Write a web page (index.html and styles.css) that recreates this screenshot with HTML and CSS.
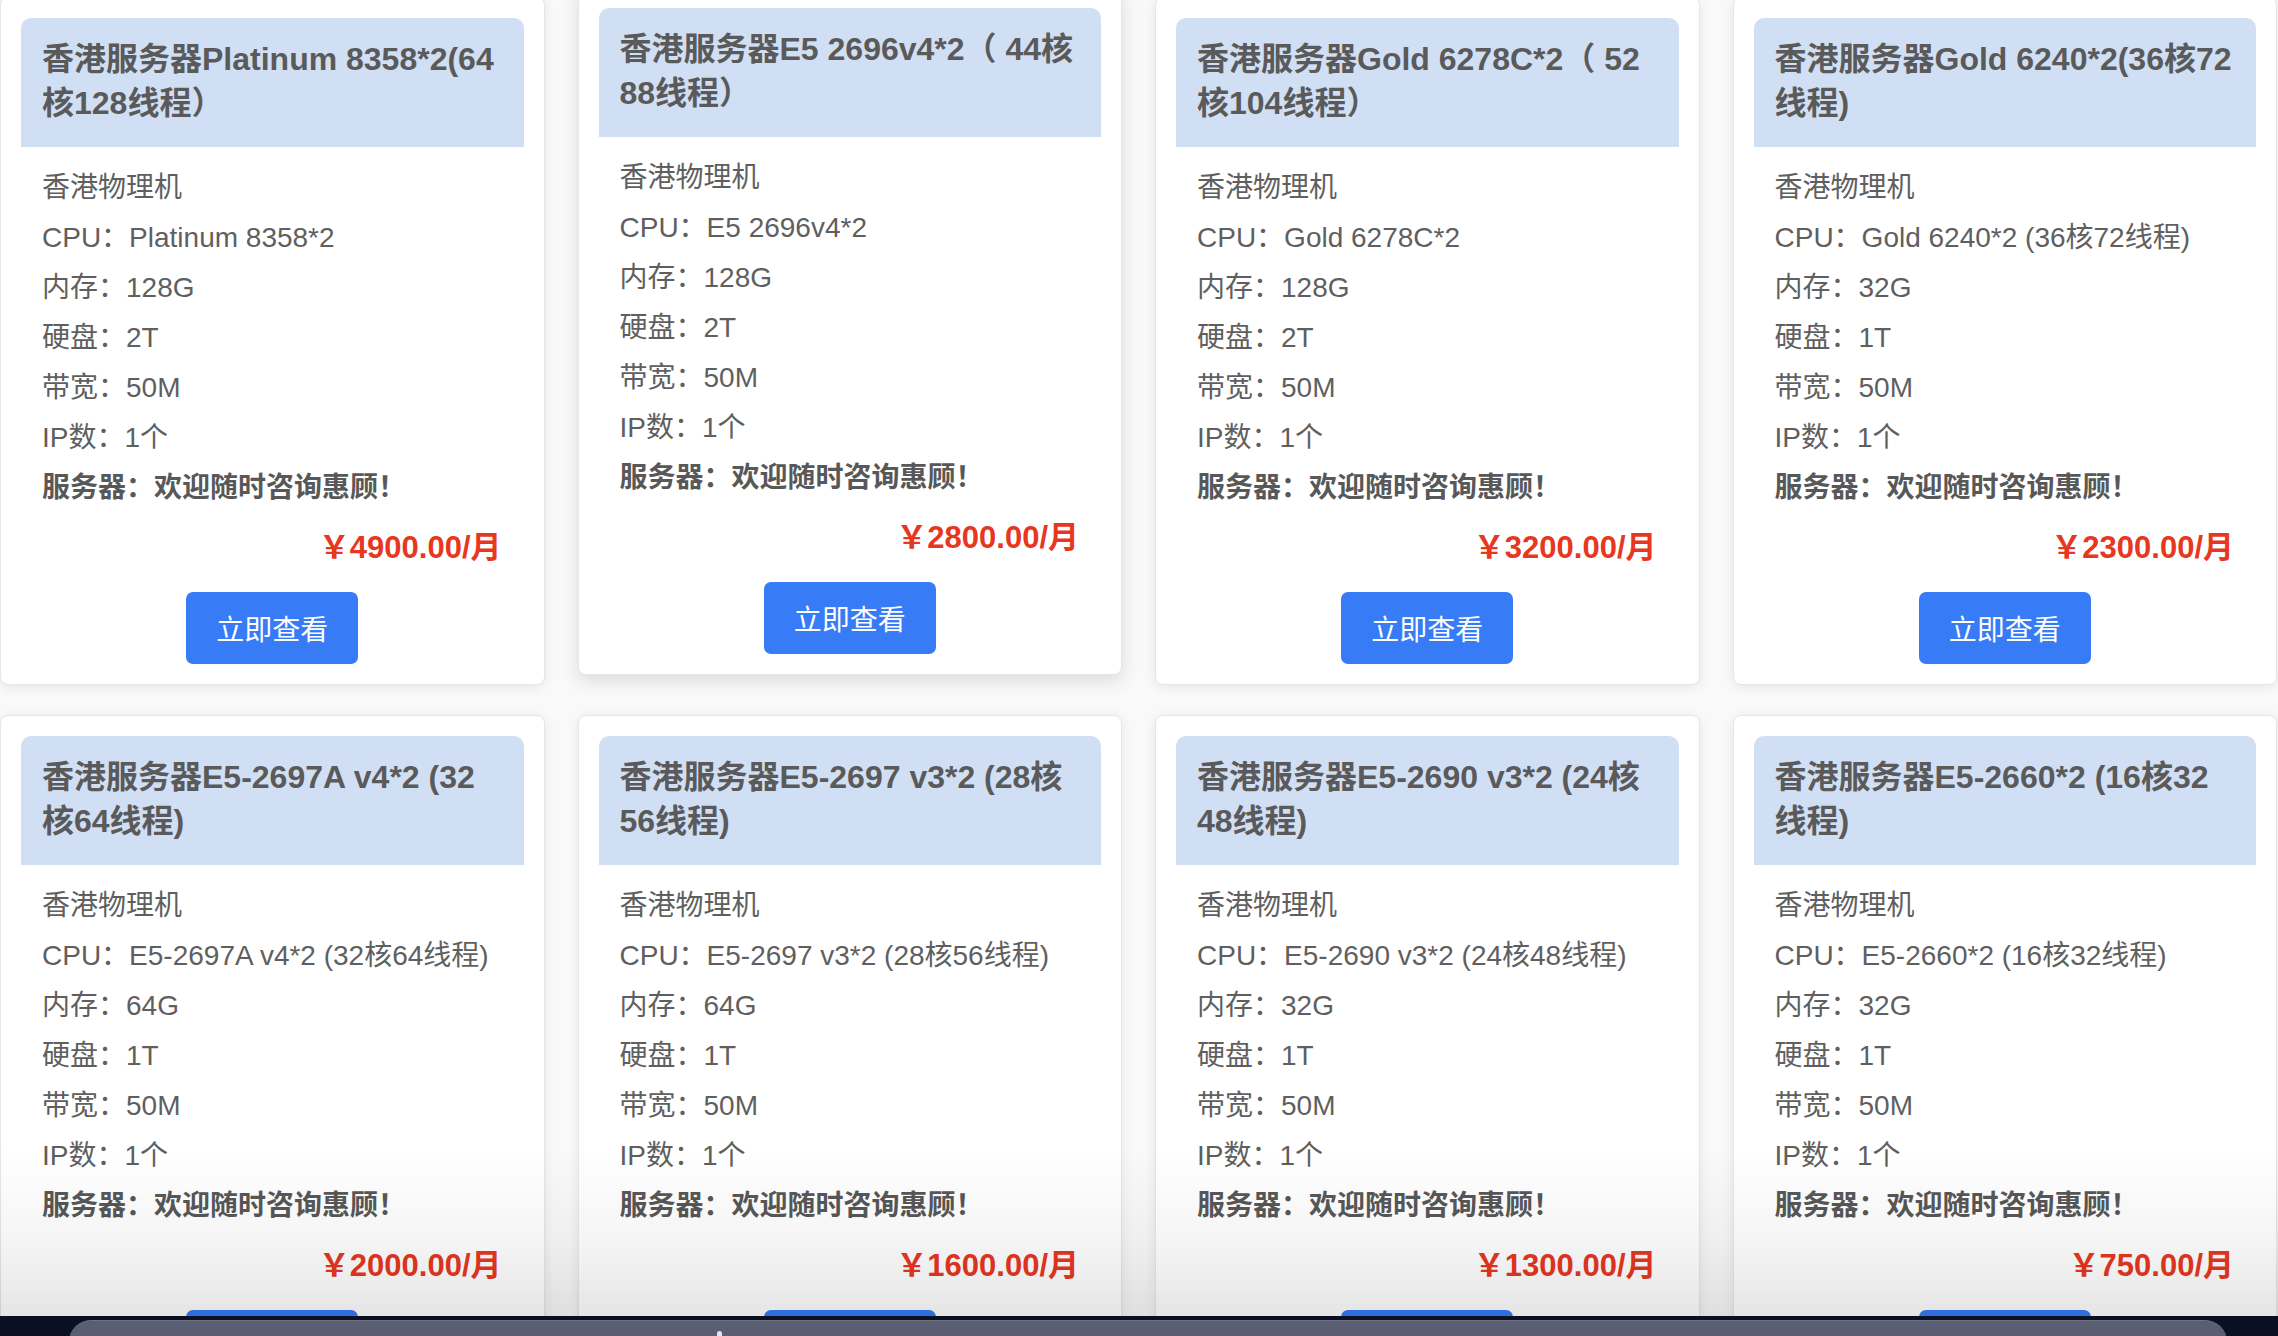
FILE: index.html
```html
<!DOCTYPE html>
<html lang="zh-CN">
<head>
<meta charset="utf-8">
<title>香港服务器</title>
<link rel="stylesheet" href="styles.css">
</head>
<body>
<main class="grid">
  <div class="card">
    <div class="card-head">香港服务器Platinum 8358*2(64核128线程）</div>
    <ul class="specs">
      <li>香港物理机</li>
      <li>CPU：Platinum 8358*2</li>
      <li>内存：128G</li>
      <li>硬盘：2T</li>
      <li>带宽：50M</li>
      <li>IP数：1个</li>
      <li class="strong">服务器：欢迎随时咨询惠顾！</li>
    </ul>
    <div class="price">￥4900.00/月</div>
    <div class="actions"><a class="btn">立即查看</a></div>
  </div>
  <div class="card is-hover">
    <div class="card-head">香港服务器E5 2696v4*2（ 44核88线程）</div>
    <ul class="specs">
      <li>香港物理机</li>
      <li>CPU：E5 2696v4*2</li>
      <li>内存：128G</li>
      <li>硬盘：2T</li>
      <li>带宽：50M</li>
      <li>IP数：1个</li>
      <li class="strong">服务器：欢迎随时咨询惠顾！</li>
    </ul>
    <div class="price">￥2800.00/月</div>
    <div class="actions"><a class="btn">立即查看</a></div>
  </div>
  <div class="card">
    <div class="card-head">香港服务器Gold 6278C*2（ 52核104线程）</div>
    <ul class="specs">
      <li>香港物理机</li>
      <li>CPU：Gold 6278C*2</li>
      <li>内存：128G</li>
      <li>硬盘：2T</li>
      <li>带宽：50M</li>
      <li>IP数：1个</li>
      <li class="strong">服务器：欢迎随时咨询惠顾！</li>
    </ul>
    <div class="price">￥3200.00/月</div>
    <div class="actions"><a class="btn">立即查看</a></div>
  </div>
  <div class="card">
    <div class="card-head">香港服务器Gold 6240*2(36核72线程)</div>
    <ul class="specs">
      <li>香港物理机</li>
      <li>CPU：Gold 6240*2 (36核72线程)</li>
      <li>内存：32G</li>
      <li>硬盘：1T</li>
      <li>带宽：50M</li>
      <li>IP数：1个</li>
      <li class="strong">服务器：欢迎随时咨询惠顾！</li>
    </ul>
    <div class="price">￥2300.00/月</div>
    <div class="actions"><a class="btn">立即查看</a></div>
  </div>

  <div class="card">
    <div class="card-head">香港服务器E5-2697A v4*2 (32核64线程)</div>
    <ul class="specs">
      <li>香港物理机</li>
      <li>CPU：E5-2697A v4*2 (32核64线程)</li>
      <li>内存：64G</li>
      <li>硬盘：1T</li>
      <li>带宽：50M</li>
      <li>IP数：1个</li>
      <li class="strong">服务器：欢迎随时咨询惠顾！</li>
    </ul>
    <div class="price">￥2000.00/月</div>
    <div class="actions"><a class="btn">立即查看</a></div>
  </div>
  <div class="card">
    <div class="card-head">香港服务器E5-2697 v3*2 (28核56线程)</div>
    <ul class="specs">
      <li>香港物理机</li>
      <li>CPU：E5-2697 v3*2 (28核56线程)</li>
      <li>内存：64G</li>
      <li>硬盘：1T</li>
      <li>带宽：50M</li>
      <li>IP数：1个</li>
      <li class="strong">服务器：欢迎随时咨询惠顾！</li>
    </ul>
    <div class="price">￥1600.00/月</div>
    <div class="actions"><a class="btn">立即查看</a></div>
  </div>
  <div class="card">
    <div class="card-head">香港服务器E5-2690 v3*2 (24核48线程)</div>
    <ul class="specs">
      <li>香港物理机</li>
      <li>CPU：E5-2690 v3*2 (24核48线程)</li>
      <li>内存：32G</li>
      <li>硬盘：1T</li>
      <li>带宽：50M</li>
      <li>IP数：1个</li>
      <li class="strong">服务器：欢迎随时咨询惠顾！</li>
    </ul>
    <div class="price">￥1300.00/月</div>
    <div class="actions"><a class="btn">立即查看</a></div>
  </div>
  <div class="card">
    <div class="card-head">香港服务器E5-2660*2 (16核32线程)</div>
    <ul class="specs">
      <li>香港物理机</li>
      <li>CPU：E5-2660*2 (16核32线程)</li>
      <li>内存：32G</li>
      <li>硬盘：1T</li>
      <li>带宽：50M</li>
      <li>IP数：1个</li>
      <li class="strong">服务器：欢迎随时咨询惠顾！</li>
    </ul>
    <div class="price">￥750.00/月</div>
    <div class="actions"><a class="btn">立即查看</a></div>
  </div>
</main>
<div class="fade"></div>
<div class="dock"><div class="dock-shelf"><span class="dock-dot"></span></div></div>
</body>
</html>
```

FILE: styles.css
```css
* { box-sizing: border-box; }
html, body {
  margin: 0;
  padding: 0;
  background: #f9f9f9;
  height: 1336px;
  overflow: hidden;
  font-family: "Liberation Sans", "Noto Sans CJK SC", sans-serif;
}
.grid {
  display: grid;
  grid-template-columns: repeat(4, 1fr);
  column-gap: 33px;
  row-gap: 30px;
  padding: 0 1px 0 0;
  margin-top: -3px;
}
.card {
  background: #fff;
  border: 1px solid #e6e6e6;
  border-radius: 8px;
  padding: 20px;
  box-shadow: 0 2px 12px rgba(0, 0, 0, 0.08);
}
.card.is-hover {
  transform: translateY(-10px);
  box-shadow: 0 6px 18px rgba(0, 0, 0, 0.12);
}
.card-head {
  background: #d1dff5;
  border-radius: 10px 10px 0 0;
  padding: 19px 18px 20px 21px;
  font-size: 32px;
  line-height: 44px;
  font-weight: 700;
  color: #5a5a5a;
  height: 129px;
}
.specs {
  list-style: none;
  margin: 16px 0 0;
  padding: 0 0 0 21px;
  font-size: 28px;
  line-height: 50px;
  color: #5f5f5f;
}
.specs li { white-space: nowrap; }
.specs .strong { font-weight: 700; color: #585858; }
.price {
  margin-top: 15px;
  height: 40px;
  line-height: 40px;
  text-align: right;
  padding-right: 22px;
  font-size: 31px;
  font-weight: 700;
  color: #e8371f;
}
.actions {
  display: flex;
  justify-content: center;
  margin-top: 24px;
}
.btn {
  display: flex;
  align-items: center;
  justify-content: center;
  width: 172px;
  height: 72px;
  border-radius: 7px;
  background: #377bf6;
  color: #fff;
  font-size: 28px;
}
.fade {
  position: fixed;
  left: 0;
  right: 0;
  bottom: 20px;
  height: 170px;
  background: linear-gradient(to bottom, rgba(0,0,0,0) 0%, rgba(0,0,0,0.04) 55%, rgba(0,0,0,0.1) 100%);
  pointer-events: none;
}
.dock {
  position: fixed;
  left: 0;
  right: 0;
  bottom: 0;
  height: 20px;
  background: #0a1022;
}
.dock-shelf {
  position: absolute;
  left: 69px;
  right: 51px;
  top: 4px;
  height: 40px;
  border-radius: 22px 22px 0 0;
  background: #595e73;
  border-top: 1px solid #6d7285;
}
.dock-dot {
  position: absolute;
  left: 648px;
  top: 10px;
  width: 5px;
  height: 8px;
  border-radius: 3px 3px 0 0;
  background: #dfe6f2;
}
```
